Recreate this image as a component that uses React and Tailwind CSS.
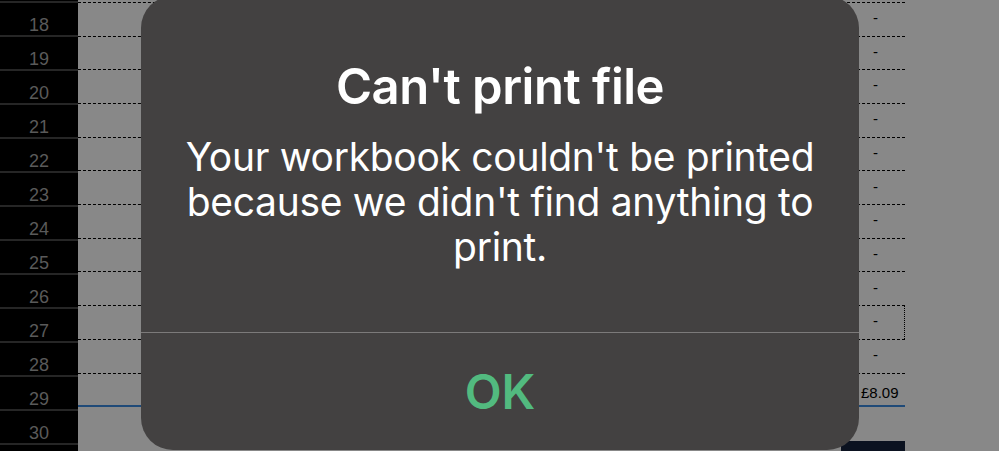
import React from 'react'

const rows = [18, 19, 20, 21, 22, 23, 24, 25, 26, 27, 28, 29, 30]

function RowCell({ num }) {
  const isTotal = num === 29
  const isLast = num === 30
  return (
    <div
      className={
        'flex h-[34px] w-[827px] ' +
        (isTotal
          ? 'border-b-2 border-solid border-[#1f4a78]'
          : isLast
          ? ''
          : 'border-b border-dashed border-black')
      }
    >
      <div className="flex-1" />
      <div
        className={
          'w-[47px] flex items-center text-[15px] text-black ' +
          (num === 27 ? 'border-r border-dotted border-black' : '')
        }
      >
        {isTotal ? (
          <span className="pl-[3px] pt-[8px]">£8.09</span>
        ) : isLast ? null : (
          <span className="pl-[15px] pb-[2px]">-</span>
        )}
      </div>
    </div>
  )
}

export default function App() {
  return (
    <div
      className="relative w-[999px] h-[451px] overflow-hidden bg-[#888888] flex"
      style={{ fontFamily: '"Liberation Sans", Arial, sans-serif' }}
    >
      {/* row headers */}
      <div className="w-[78px] bg-black flex flex-col">
        <div className="h-[3px] border-b-2 border-[#262626]" />
        {rows.map((n) => (
          <div
            key={n}
            className="h-[34px] flex items-end justify-center pb-[1px] border-b-2 border-[#262626] text-[18px] leading-none text-[#5a5a5a]"
          >
            {n}
          </div>
        ))}
      </div>

      {/* sheet cells */}
      <div className="flex flex-col">
        <div className="h-[3px] w-[827px] border-b border-dashed border-black" />
        {rows.map((n) => (
          <RowCell key={n} num={n} />
        ))}
        <div className="flex w-[827px]">
          <div className="flex-1" />
          <div className="w-[64px] h-[10px] bg-[#0b1220]" />
        </div>
      </div>

      {/* alert */}
      <div
        className="absolute left-[141px] top-[-4px] w-[718px] h-[454px] rounded-[32px] bg-[#434141] flex flex-col text-white"
        style={{ fontFamily: 'Inter, "Noto Sans", sans-serif' }}
      >
        <div className="flex-1 flex flex-col items-center pt-[64px] px-4 text-center">
          <div className="text-[49px] leading-[54px] font-semibold tracking-[-0.5px]">
            Can't print file
          </div>
          <div className="mt-[20px] text-[39px] leading-[45px] font-normal tracking-[-0.3px]">
            Your workbook couldn't be printed
            <br />
            because we didn't find anything to
            <br />
            print.
          </div>
        </div>
        <div className="h-px bg-[#7c7a7a]" />
        <div className="h-[117px] flex items-center justify-center text-[48px] font-semibold text-[#52ba7f]">
          OK
        </div>
      </div>
    </div>
  )
}
